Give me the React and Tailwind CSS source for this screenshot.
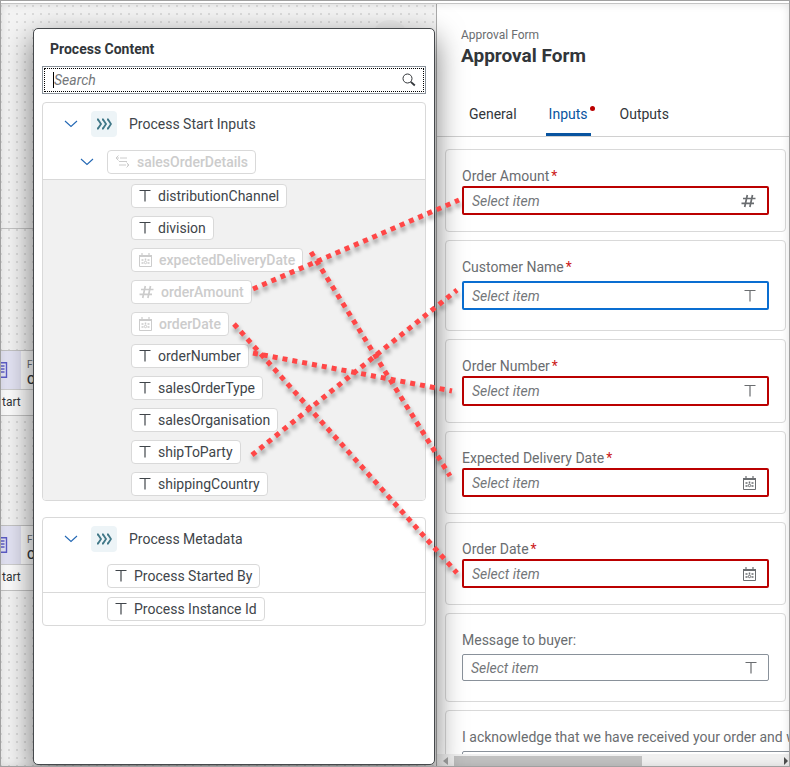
import React from "react";

const ICON_PROPS = { fill: "none", stroke: "currentColor", "aria-hidden": true };

function TextIcon() {
  return (
    <svg width="12" height="14" viewBox="0 0 12 14" {...ICON_PROPS}>
      <path d="M0.500 1.500h11M6 1.500v11" strokeWidth="1.200" />
    </svg>
  );
}

function NumberIcon() {
  return (
    <svg width="15" height="14" viewBox="0 0 15 14" {...ICON_PROPS}>
      <path d="M2 4.500H14.500M0.500 9.300h12.500M6.300 1L3.700 13M11.500 1L8.900 13" strokeWidth="1.700" />
    </svg>
  );
}

function CalendarIcon() {
  return (
    <svg width="13" height="14" viewBox="0 0 13 14" {...ICON_PROPS}>
      <path d="M0.500 2.500h12v11h-12z" />
      <path d="M0 3h13" strokeWidth="2" />
      <path d="M3 0v2M10 0v2" strokeWidth="1.200" />
      <path d="M2.500 7h2M2.500 10h2M8.500 7h2M8.500 10h2M6.500 5.500v2" strokeWidth="1.500" />
      <circle cx="6.500" cy="9.500" r="1.200" />
    </svg>
  );
}

function StructureIcon() {
  return (
    <svg width="15" height="14" viewBox="0 0 15 14" {...ICON_PROPS}>
      <path d="M3.500 0.500L1 3l2.500 2.500M1 3h3M5 3h7M4 6.500h8M4 10h7M11.500 7.500L14 10l-2.500 2.500M12 10h2" />
    </svg>
  );
}

function ChevronDown() {
  return (
    <svg width="14" height="8" viewBox="0 0 14 8" {...ICON_PROPS}>
      <path d="M1 1l6 5.500L13 1" strokeWidth="1.100" />
    </svg>
  );
}

function ProcessIcon() {
  return (
    <span className="flex size-[26px] shrink-0 items-center justify-center rounded bg-[#edf4f7] text-[#417888]">
      <svg width="16" height="12" viewBox="0 0 16 12" {...ICON_PROPS}>
        <path d="M1 1.500h1l3 4.500-3 4.500H1M6 1.500h1l3 4.500-3 4.500H6M11 1.500h1l3 4.500-3 4.500h-1" strokeWidth="1.800" />
      </svg>
    </span>
  );
}

const TYPE_ICONS = { text: TextIcon, number: NumberIcon, date: CalendarIcon, structure: StructureIcon };

function Chip({ type = "text", disabled = false, children }) {
  const Icon = TYPE_ICONS[type];
  return (
    <button
      type="button"
      disabled={disabled}
      className={`flex h-6 w-fit items-center gap-[7px] whitespace-nowrap rounded border border-[#d9d9d9] bg-white px-[7px] text-[14px] leading-5 ${
        disabled ? "font-medium text-[#cccccc]" : "text-[#40454a]"
      }`}
    >
      <Icon />
      {children}
    </button>
  );
}

function GroupHeader({ children }) {
  return (
    <div className="flex h-[42px] items-center pl-[21px]">
      <button type="button" aria-label={`Collapse ${children}`} className="mr-[13px] text-[#2468b4]">
        <ChevronDown />
      </button>
      <ProcessIcon />
      <span className="ml-3 text-[14px] leading-5 text-[#40454a]">{children}</span>
    </div>
  );
}

const ORDER_FIELDS = [
  { name: "distributionChannel" },
  { name: "division" },
  { name: "expectedDeliveryDate", type: "date", disabled: true },
  { name: "orderAmount", type: "number", disabled: true },
  { name: "orderDate", type: "date", disabled: true },
  { name: "orderNumber" },
  { name: "salesOrderType" },
  { name: "salesOrganisation" },
  { name: "shipToParty" },
  { name: "shippingCountry" },
];

function ProcessContent() {
  return (
    <section
      aria-label="Process Content"
      className="relative z-10 flex min-h-0 flex-1 flex-col rounded-[5px] border border-[#45484b] bg-white px-2 shadow-[0_10px_30px_0_rgba(0,0,0,0.55)]"
    >
      <h2 className="mt-[10px] pl-2 text-[14px] font-bold leading-5 text-[#32363a]">Process Content</h2>
      <div className="mt-[7px] flex h-7 shrink-0 border border-[#89919a] bg-white p-px">
        <div className="flex flex-1 items-center border border-dotted border-black pl-2 pr-[7px]">
          <span className="h-4 w-px bg-black" />
          <input
            type="text"
            aria-label="Search"
            placeholder="Search"
            className="min-w-0 flex-1 text-[14px] leading-5 outline-none placeholder:italic placeholder:text-[#74777a]"
          />
          <button type="button" aria-label="Start search" className="text-[#32363a]">
            <svg width="14" height="14" viewBox="0 0 14 14" {...ICON_PROPS}>
              <circle cx="5.500" cy="5.500" r="4.500" />
              <path d="M8.800 8.800l4 3.700" strokeWidth="1.800" />
            </svg>
          </button>
        </div>
      </div>
      <div className="mt-2 shrink-0 overflow-hidden rounded border border-[#d9d9d9]">
        <GroupHeader>Process Start Inputs</GroupHeader>
        <div className="flex items-center gap-[13px] py-[5px] pl-[37px]">
          <button type="button" aria-label="Collapse salesOrderDetails" className="text-[#2468b4]">
            <ChevronDown />
          </button>
          <Chip type="structure" disabled>salesOrderDetails</Chip>
        </div>
        <div className="flex flex-col gap-2 border-t border-[#d9d9d9] bg-[#f1f1f1] pb-1 pl-[88px] pt-1">
          {ORDER_FIELDS.map((field) => (
            <Chip key={field.name} type={field.type} disabled={field.disabled}>{field.name}</Chip>
          ))}
        </div>
      </div>
      <div className="mt-4 shrink-0 rounded border border-[#d9d9d9]">
        <GroupHeader>Process Metadata</GroupHeader>
        <div className="border-b border-[#d9d9d9] py-1 pl-16"><Chip>Process Started By</Chip></div>
        <div className="py-1 pl-16"><Chip>Process Instance Id</Chip></div>
      </div>
    </section>
  );
}

function CanvasNode() {
  return (
    <div className="w-[120px] border border-[#c4c4c4] bg-[#fdfdfd]">
      <div className="flex h-[39px] border-b border-[#cfcfcf]">
        <div className="flex w-5 items-center bg-[#e4e4f4] text-[#5d5dc8]">
          <svg width="7" height="16" viewBox="0 0 7 16" {...ICON_PROPS}>
            <path d="M0 .700h5.500v14.500H0M0 4h3.500M0 7h3.500M0 10h3.500" strokeWidth="1.400" />
          </svg>
        </div>
        <div className="pl-[6px] pt-[6px] text-[#32363a]">
          <div className="text-[10px] leading-4 text-[#6a6d70]">F</div>
          <div className="text-[12px] font-medium leading-[14px]">O</div>
        </div>
      </div>
      <div className="h-[25px] pl-px text-[12px] leading-6 text-[#32363a]">tart</div>
    </div>
  );
}

function SelectField({ id, label, required, type = "text", tone, size = "regular", wide }) {
  const Icon = TYPE_ICONS[type];
  const tones = {
    error: "border-2 border-[#bb0000]",
    active: "border-2 border-[#0a6ed1]",
    plain: "border border-[#89919a]",
  };
  const sizes = { regular: "h-[29px]", tall: "h-[30px]", spaced: "my-1 h-[29px]", slim: "my-1 h-[27px]" };
  return (
    <div className={`shrink-0 rounded border border-[#d9d9d9] p-4 ${wide ? "w-[480px]" : "mr-[3px]"}`}>
      <label htmlFor={id} className="block whitespace-nowrap text-[14px] leading-5 text-[#6a6d70]">
        {label}
        {required && <span className="ml-[2px] text-[#cc1919]">*</span>}
      </label>
      <div className={`flex items-center rounded-[2px] bg-white pl-2 pr-[11px] text-[#6a6d70] ${tones[tone]} ${sizes[size]}`}>
        <input
          id={id}
          type="text"
          placeholder="Select item"
          className="min-w-0 flex-1 text-[14px] leading-5 outline-none placeholder:italic placeholder:text-[#74777a]"
        />
        <Icon />
      </div>
    </div>
  );
}

function FormPanel() {
  return (
    <section aria-label="Approval Form" className="flex min-w-0 flex-1 flex-col border-l border-[#aaaaaa] bg-white">
      <header className="shrink-0 border-b border-[#d0d0d0] pl-6">
        <p className="mt-[22px] text-[12px] leading-[18px] text-[#6a6d70]">Approval Form</p>
        <h1 className="text-[19px] font-bold leading-6 text-[#32363a]">Approval Form</h1>
        <nav className="mt-[34px] flex h-[34px] gap-[29px] pl-2 text-[14px] leading-6 text-[#32363a]">
          <button type="button" className="flex">General</button>
          <button type="button" className="relative flex border-b-[3px] border-[#0854a0] px-[3px] text-[#0854a0]">
            Inputs
            <span className="absolute -right-1 top-1 size-[5px] rounded-full bg-[#bb0000]" />
          </button>
          <button type="button" className="flex">Outputs</button>
        </nav>
      </header>
      <div className="flex min-h-0 flex-1 flex-col gap-2 overflow-hidden pl-2 pt-3">
        <SelectField id="amount" label="Order Amount" required type="number" tone="error" />
        <SelectField id="customer" label="Customer Name" required tone="active" size="spaced" />
        <SelectField id="number" label="Order Number" required tone="error" size="tall" />
        <SelectField id="delivery" label="Expected Delivery Date" required type="date" tone="error" />
        <SelectField id="date" label="Order Date" required type="date" tone="error" />
        <SelectField id="message" label="Message to buyer:" tone="plain" size="slim" />
        <SelectField id="acknowledge" label="I acknowledge that we have received your order and w" tone="plain" size="slim" wide />
      </div>
      <div className="flex h-3 shrink-0 items-end bg-[#f0f0f0] text-[#505050]">
        <svg width="17" height="10" viewBox="0 0 17 10" fill="#a3a3a3" aria-hidden="true"><path d="M11 1v8L6 5z" /></svg>
        <div className="h-[10px] w-[188px] bg-[#c1c1c1]" />
        <svg className="ml-auto" width="6" height="10" viewBox="0 0 6 10" fill="currentColor" aria-hidden="true"><path d="M1 1v8l4-4z" /></svg>
      </div>
    </section>
  );
}

const LINKS = [
  "M253 289L459 200",
  "M311 252L450 476",
  "M234 324L457 573",
  "M253 353L452 391",
  "M252 455L457 290",
];

export default function App() {
  return (
    <main className="relative flex h-screen flex-col overflow-hidden border border-[#a0a0a0] bg-white pt-[2px] font-[Roboto,sans-serif]">
      <div className="relative flex min-h-0 flex-1 border-t border-[#c4c4c4]">
        <div className="relative flex w-[435px] shrink-0 flex-col bg-[#f4f4f4] bg-[radial-gradient(circle,#dcdcdc_1px,transparent_1.5px)] bg-[size:8px_8px] bg-[position:4px_6px] pb-px pl-8 pr-px pt-6">
          <div className="absolute left-0 top-56 h-px w-8 bg-[#c4c4c4]" />
          <div className="absolute -left-px top-[346px]"><CanvasNode /></div>
          <div className="absolute -left-px top-[521px]"><CanvasNode /></div>
          <div className="absolute left-[371px] top-4 size-9 rounded-full bg-[#ececec]" />
          <ProcessContent />
        </div>
        <FormPanel />
        <div className="pointer-events-none absolute inset-0 shadow-[inset_0_0_8px_rgba(0,0,0,0.12)]" />
      </div>
      <svg
        className="pointer-events-none absolute -left-px -top-px z-20 drop-shadow-[1px_4px_2px_rgba(0,0,0,0.4)]"
        width="790"
        height="767"
        fill="none"
        stroke="#ff4747"
        strokeWidth="5"
        strokeDasharray="5 5"
        aria-hidden="true"
      >
        {LINKS.map((link) => (
          <path key={link} d={link} />
        ))}
      </svg>
    </main>
  );
}
